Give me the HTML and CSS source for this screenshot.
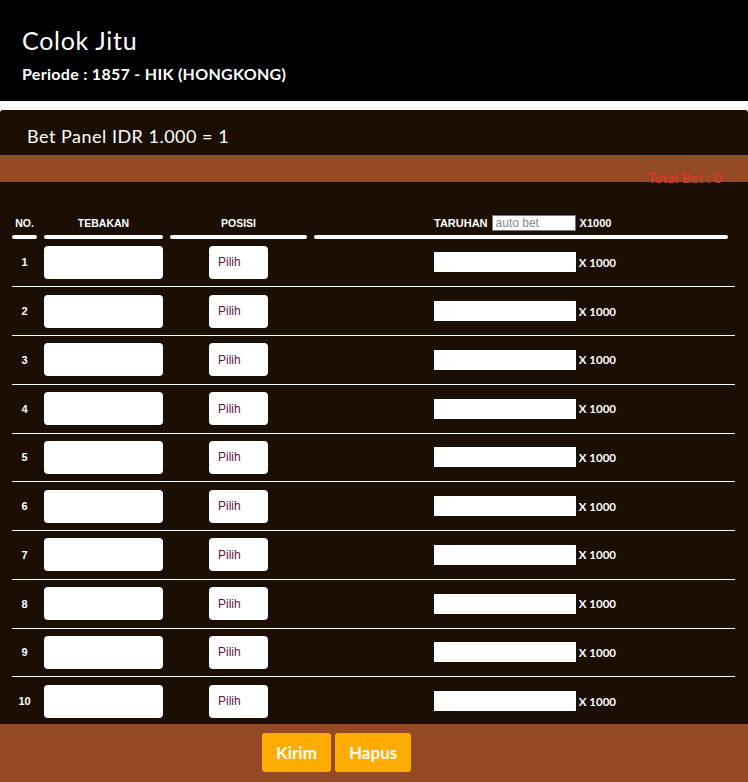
FILE: index.html
```html
<!DOCTYPE html>
<html>
<head>
	<title>Colok Jitu</title>
	<link rel="stylesheet" href="styles.css">
</head>
<body>
	<div class="top">
		<h1>Colok Jitu</h1>
		<p class="periode">Periode : 1857 - HIK (HONGKONG)</p>
	</div>

	<div class="panel">
		<div class="panel-title">Bet Panel IDR 1.000 = 1</div>
		<div class="strip"><span class="total">Total Bet : 0</span></div>

		<div class="bets">
			<div class="bets-head">
				<div class="th">NO.</div>
				<div class="th">TEBAKAN</div>
				<div class="th">POSISI</div>
				<div class="th th-bet">TARUHAN <input type="text" class="auto-bet" placeholder="auto bet"> X1000</div>
			</div>
			<div class="bets-bars">
				<span></span><span></span><span></span><span></span>
			</div>

			<div class="bet-row">
				<div class="no">1</div>
				<div><input type="text" class="guess"></div>
				<div class="pos"><select><option>Pilih</option></select></div>
				<div class="bet"><input type="text" class="amount"> X 1000</div>
			</div>
			<div class="bet-row">
				<div class="no">2</div>
				<div><input type="text" class="guess"></div>
				<div class="pos"><select><option>Pilih</option></select></div>
				<div class="bet"><input type="text" class="amount"> X 1000</div>
			</div>
			<div class="bet-row">
				<div class="no">3</div>
				<div><input type="text" class="guess"></div>
				<div class="pos"><select><option>Pilih</option></select></div>
				<div class="bet"><input type="text" class="amount"> X 1000</div>
			</div>
			<div class="bet-row">
				<div class="no">4</div>
				<div><input type="text" class="guess"></div>
				<div class="pos"><select><option>Pilih</option></select></div>
				<div class="bet"><input type="text" class="amount"> X 1000</div>
			</div>
			<div class="bet-row">
				<div class="no">5</div>
				<div><input type="text" class="guess"></div>
				<div class="pos"><select><option>Pilih</option></select></div>
				<div class="bet"><input type="text" class="amount"> X 1000</div>
			</div>
			<div class="bet-row">
				<div class="no">6</div>
				<div><input type="text" class="guess"></div>
				<div class="pos"><select><option>Pilih</option></select></div>
				<div class="bet"><input type="text" class="amount"> X 1000</div>
			</div>
			<div class="bet-row">
				<div class="no">7</div>
				<div><input type="text" class="guess"></div>
				<div class="pos"><select><option>Pilih</option></select></div>
				<div class="bet"><input type="text" class="amount"> X 1000</div>
			</div>
			<div class="bet-row">
				<div class="no">8</div>
				<div><input type="text" class="guess"></div>
				<div class="pos"><select><option>Pilih</option></select></div>
				<div class="bet"><input type="text" class="amount"> X 1000</div>
			</div>
			<div class="bet-row">
				<div class="no">9</div>
				<div><input type="text" class="guess"></div>
				<div class="pos"><select><option>Pilih</option></select></div>
				<div class="bet"><input type="text" class="amount"> X 1000</div>
			</div>
			<div class="bet-row">
				<div class="no">10</div>
				<div><input type="text" class="guess"></div>
				<div class="pos"><select><option>Pilih</option></select></div>
				<div class="bet"><input type="text" class="amount"> X 1000</div>
			</div>
		</div>

		<div class="actions">
			<button>Kirim</button> <button>Hapus</button>
		</div>
	</div>
</body>
</html>
```

FILE: styles.css
```css
body {
	margin: 0;
	font-family: 'Lato', sans-serif;
	background-color: #fff;
	color: #fff;
}
.top {
	background-color: #000;
	height: 101px;
	padding: 25px 22px 0;
	box-sizing: border-box;
}
.top h1 {
	margin: 0;
	font-size: 25px;
	font-weight: normal;
	letter-spacing: 0.7px;
	line-height: 30px;
}
.periode {
	margin: 9px 0 0;
	font-size: 16px;
	font-weight: bold;
	letter-spacing: 0.3px;
	line-height: 20px;
}
.panel {
	margin-top: 9px;
	background-color: #1b0e04; /* dark panel */
	border-radius: 3px 3px 0 0;
}
.panel-title {
	height: 45px;
	padding: 15px 0 0 27px;
	box-sizing: border-box;
	font-size: 18px;
	letter-spacing: 0.5px;
	line-height: 22px;
}
.strip {
	height: 27px;
	background-color: #954a26;
}
.total {
	display: block;
	text-align: right;
	padding: 14px 26px 0 0;
	line-height: 17px;
	font-size: 14px;
	font-weight: bold;
	color: #d33c2a;
}

/* bet table */
.bets {
	margin: 33px 13px 0 12px;
	font-family: 'Liberation Sans', Arial, sans-serif;
}
.bets-head, .bets-bars, .bet-row {
	display: grid;
	grid-template-columns: 25px 119px 137px 414px;
	column-gap: 7px;
}
.bets-head {
	height: 16px;
	align-items: center;
}
.th {
	font-size: 10.5px;
	font-weight: bold;
	text-align: center;
	line-height: 16px;
}
.th-bet {
	text-align: left;
	padding-left: 120px;
	display: flex;
	align-items: center;
	font-size: 11px;
}
.auto-bet {
	width: 84px;
	height: 16px;
	box-sizing: border-box;
	margin: 0 4px 0 4px;
	padding: 0 3px;
	border: 1px solid #767676;
	font-family: 'Liberation Sans', Arial, sans-serif;
	font-size: 12px;
}
.auto-bet::placeholder {
	color: #8a8a8a;
}
.bets-bars {
	margin-top: 3.5px;
}
.bets-bars span {
	height: 4px;
	background-color: #fff;
	border-radius: 2px;
}
.bet-row {
	align-items: center;
	padding: 7.25px 0 7.5px;
	border-bottom: 1px solid #fff;
}
.bet-row:last-child {
	border-bottom: none;
	padding-bottom: 6.5px;
}
.no {
	text-align: center;
	font-size: 11px;
	font-weight: bold;
}
.guess {
	display: block;
	width: 119px;
	height: 33px;
	box-sizing: border-box;
	border: none;
	border-radius: 4px;
	background-color: #fff;
}
.pos {
	text-align: center;
}
.pos select {
	width: 59px;
	height: 33px;
	border: none;
	border-radius: 4px;
	padding: 0 0 0 9px;
	background-color: #fff;
	color: #5e1549;
	font-family: 'Liberation Sans', Arial, sans-serif;
	font-size: 12px;
	appearance: none;
	-webkit-appearance: none;
	vertical-align: middle;
}
.bet {
	display: flex;
	align-items: center;
	padding-left: 120px;
	font-family: 'Lato', sans-serif;
	font-size: 11.5px;
	font-weight: bold;
	white-space: pre;
}
.amount {
	width: 142px;
	height: 20px;
	box-sizing: border-box;
	border: none;
	margin: 0;
	background-color: #fff;
}

.actions {
	height: 58px;
	padding: 9px 0 0 262px;
	box-sizing: border-box;
	background-color: #954a26;
}
.actions button {
	height: 39px;
	padding: 0 14px;
	border: none;
	border-radius: 3px;
	background-color: #ffac00;
	color: #fff;
	font-family: 'Lato', sans-serif;
	font-size: 17px;
	font-weight: bold;
	cursor: pointer;
}
```
